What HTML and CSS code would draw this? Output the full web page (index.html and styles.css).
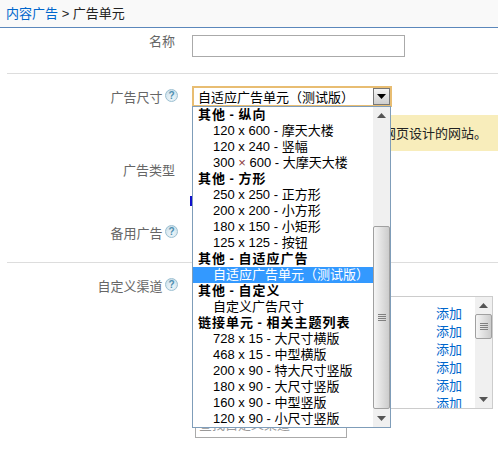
FILE: index.html
```html
<!DOCTYPE html>
<html lang="zh-CN">
<head>
  <meta charset="UTF-8" />
  <title>广告单元</title>
  <link rel="stylesheet" href="styles.css">
</head>
<body>
  <div class="breadcrumb"><a href="#">内容广告</a> &gt; 广告单元</div>

  <div class="form-section first-section">
    <div class="form-row name-row">
      <label class="field-label plain-label">名称</label>
      <input class="text-input" type="text">
    </div>
  </div>

  <div class="form-section second-section">
    <div class="form-row size-row">
      <label class="field-label">广告尺寸 <span class="help">?</span></label>
      <div class="fake-select">
        <span class="select-value">自适应广告单元（测试版）</span>
        <span class="select-arrow"><svg width="9" height="5" viewBox="0 0 9 5"><path d="M0 0h9L4.500 5z" fill="#000"/></svg></span>
      </div>
    </div>
    <div class="notice">适合响应式网页设计的网站。</div>
    <div class="form-row type-row">
      <label class="field-label plain-label">广告类型</label>
    </div>
    <div class="radio-line"><span class="radio-mark"></span></div>
    <div class="form-row backup-row">
      <label class="field-label">备用广告 <span class="help">?</span></label>
    </div>
  </div>

  <div class="form-section third-section">
    <div class="form-row channel-row">
      <label class="field-label">自定义渠道 <span class="help">?</span></label>
    </div>
    <div class="channel-box">
      <div class="channel-links">
        <a href="#">添加</a>
        <a href="#">添加</a>
        <a href="#">添加</a>
        <a href="#">添加</a>
        <a href="#">添加</a>
        <a href="#">添加</a>
      </div>
      <div class="scrollbar channel-scroll">
        <span class="scroll-btn"><svg width="9" height="5" viewBox="0 0 9 5"><path d="M4.500 0L9 5H0z" fill="#555"/></svg></span>
        <div class="scroll-track">
          <span class="scroll-thumb small-thumb"><i></i><i></i><i></i><i></i></span>
        </div>
        <span class="scroll-btn"><svg width="9" height="5" viewBox="0 0 9 5"><path d="M0 0h9L4.500 5z" fill="#555"/></svg></span>
      </div>
    </div>
    <div class="search-input">查找自定义渠道</div>
  </div>

  <!-- open dropdown lies over the form -->
  <div class="dropdown">
    <ul class="option-list">
      <li class="group">其他 - 纵向</li>
      <li>120 x 600 - 摩天大楼</li>
      <li>120 x 240 - 竖幅</li>
      <li>300 <span class="red-x">×</span> 600 - 大摩天大楼</li>
      <li class="group">其他 - 方形</li>
      <li>250 x 250 - 正方形</li>
      <li>200 x 200 - 小方形</li>
      <li>180 x 150 - 小矩形</li>
      <li>125 x 125 - 按钮</li>
      <li class="group">其他 - 自适应广告</li>
      <li class="selected">自适应广告单元（测试版）</li>
      <li class="group">其他 - 自定义</li>
      <li>自定义广告尺寸</li>
      <li class="group">链接单元 - 相关主题列表</li>
      <li>728 x 15 - 大尺寸横版</li>
      <li>468 x 15 - 中型横版</li>
      <li>200 x 90 - 特大尺寸竖版</li>
      <li>180 x 90 - 大尺寸竖版</li>
      <li>160 x 90 - 中型竖版</li>
      <li>120 x 90 - 小尺寸竖版</li>
    </ul>
    <div class="scrollbar list-scroll">
      <span class="scroll-btn"><svg width="9" height="5" viewBox="0 0 9 5"><path d="M4.500 0L9 5H0z" fill="#555"/></svg></span>
      <div class="scroll-track">
        <span class="scroll-thumb big-thumb"><i></i><i></i><i></i><i></i></span>
      </div>
      <span class="scroll-btn"><svg width="9" height="5" viewBox="0 0 9 5"><path d="M0 0h9L4.500 5z" fill="#555"/></svg></span>
    </div>
  </div>
</body>
</html>
```

FILE: styles.css
```css
* {
  box-sizing: border-box;
  margin: 0;
  padding: 0;
}

body {
  font-family: "Liberation Sans", "Noto Sans CJK SC", sans-serif;
  font-size: 13px;
  background: #fff;
  color: #000;
  height: 450px;
  overflow: hidden;
  position: relative;
}

a {
  color: #0066cc;
  text-decoration: none;
}

.breadcrumb {
  height: 28px;
  padding: 5px 6px 0;
  line-height: 17px;
  background: #f9f9f9;
  border-bottom: 1px solid #5b87bb;
  color: #222;
}

.form-section {
  margin-left: 7px;
  border-bottom: 1px solid #dddddd;
}

.first-section {
  height: 46px;
  padding-top: 7px;
}

.second-section {
  height: 189px;
  padding-top: 12px;
}

.third-section {
  border-bottom: 0;
  padding-top: 14px;
}

.form-row {
  display: flex;
  align-items: flex-start;
}

.field-label {
  width: 171px;
  margin-right: 14px;
  text-align: right;
  color: #666;
  line-height: 20px;
  word-spacing: -1px;
  white-space: nowrap;
  flex-shrink: 0;
}

.plain-label {
  padding-right: 3px;
}

.name-row .field-label {
  margin-top: -3px;
}

.size-row {
  height: 21px;
}

.size-row .field-label {
  margin-top: 2px;
}

.text-input {
  width: 213px;
  height: 22px;
  border: 1px solid #aaaaaa;
  background: #fff;
}

.help {
  display: inline-block;
  width: 13px;
  height: 13px;
  border-radius: 50%;
  border: 1px solid #9cc0d2;
  background: radial-gradient(circle at 50% 70%, #f2f8fb, #c4dbe7);
  color: #4f8fb0;
  font-size: 10px;
  font-weight: bold;
  line-height: 11px;
  text-align: center;
  vertical-align: 3px;
}

.fake-select {
  width: 200px;
  height: 21px;
  border: 2px solid #e8bd72;
  display: flex;
  justify-content: space-between;
  align-items: center;
  padding-left: 4px;
  background: #fff;
}

.select-arrow {
  width: 17px;
  height: 17px;
  border: 1px solid #777;
  background: linear-gradient(#f4f4f4, #cfcfcf);
  display: flex;
  justify-content: center;
  align-items: center;
}

.notice {
  margin: 8px 0 0 185px;
  height: 36px;
  background: #f8edbb;
  padding: 10px 0 0 126px;
  line-height: 17px;
  white-space: nowrap;
  overflow: hidden;
  color: #222;
}

.type-row {
  margin-top: 10px;
}

.radio-line {
  margin: 15px 0 0 183px;
  height: 10px;
}

.radio-mark {
  display: block;
  width: 2px;
  height: 10px;
  background: #1010cc;
}

.backup-row {
  margin-top: 18px;
}

.channel-box {
  margin: -1px 0 0 185px;
  width: 301px;
  height: 113px;
  border: 1px solid #cccccc;
  display: flex;
  justify-content: flex-end;
}

.channel-links {
  display: flex;
  flex-direction: column;
  gap: 1px;
  padding-top: 8px;
  margin-right: 13px;
  height: 111px;
  overflow: hidden;
}

.channel-links a {
  line-height: 17px;
}

.scrollbar {
  width: 17px;
  display: flex;
  flex-direction: column;
  background: #f0f0f0;
}

.channel-scroll {
  height: 111px;
}

.scroll-btn {
  height: 17px;
  flex-shrink: 0;
  display: flex;
  justify-content: center;
  align-items: center;
}

.scroll-track {
  flex: 1;
  display: flex;
  flex-direction: column;
}

.scroll-thumb {
  display: flex;
  flex-direction: column;
  justify-content: center;
  align-items: center;
  gap: 1px;
  border: 1px solid #a0a0a0;
  border-radius: 2px;
  background: linear-gradient(to right, #f5f5f5, #cccccc);
}

.scroll-thumb i {
  display: block;
  width: 8px;
  height: 1px;
  background: #808080;
}

.small-thumb {
  height: 25px;
}

.big-thumb {
  height: 183px;
  margin-top: 102px;
}

.search-input {
  margin: 4px 0 0 188px;
  width: 152px;
  height: 25px;
  border: 1px solid #aaaaaa;
  padding: 2px 0 0 3px;
  color: #999;
  line-height: 17px;
}

.dropdown {
  position: absolute;
  left: 192px;
  top: 106px;
  width: 199px;
  height: 322px;
  border: 1px solid #7f9db9;
  background: #fff;
  display: flex;
}

.option-list {
  width: 181px;
  list-style: none;
}

.option-list li {
  height: 16px;
  line-height: 16px;
  padding-left: 20px;
  white-space: nowrap;
}

.option-list .group {
  padding-left: 5px;
  font-weight: bold;
  letter-spacing: 1px;
  word-spacing: -1px;
}

.option-list .selected {
  background: #3399ff;
  color: #fff;
}

.red-x {
  color: #8a3a3a;
}

.list-scroll {
  width: 17px;
}
```
